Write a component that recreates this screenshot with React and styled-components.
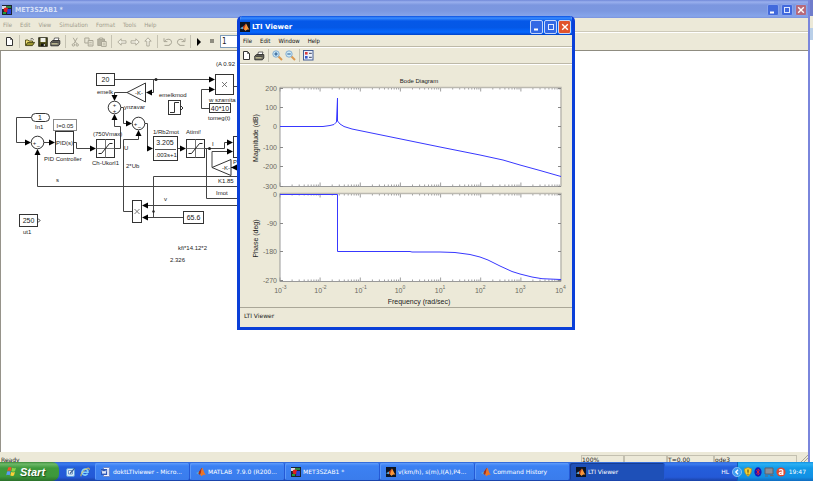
import React from "react";
import styled, { createGlobalStyle, css } from "styled-components";

const uiFont = `"DejaVu Sans Condensed", "DejaVu Sans", sans-serif`;
const wideFont = `"DejaVu Sans", sans-serif`;
const plotFont = `"Liberation Sans", Arial, sans-serif`;

const GlobalStyle = createGlobalStyle`
  * {
    box-sizing: border-box;
  }
  body {
    margin: 0;
    overflow: hidden;
    font-family: ${uiFont};
    font-size: 6px;
    line-height: 8px;
  }
  button, input {
    font: inherit;
    color: inherit;
    margin: 0;
    padding: 0;
    border: 0;
    background: none;
  }
  svg {
    display: block;
    flex-shrink: 0;
  }
`;

const Desktop = styled.div`
  height: 100vh;
  display: flex;
  flex-direction: column;
`;

const Workspace = styled.div`
  position: relative;
  flex: 1;
  min-height: 0;
  display: flex;
`;

const MainWindow = styled.section`
  flex: 1;
  min-width: 0;
  display: flex;
  flex-direction: column;
  background: #ece9d8;
  border-right: 2px solid #7a86dc;
`;

const WindowBehind = styled.div`
  width: 3px;
  background: linear-gradient(#6f7ccb 0 16px, #ece9d8 16px 28px, #b9cfe8 28px 40px, #fff 40px);
`;

const TitleBar = styled.header`
  display: flex;
  align-items: center;
  gap: ${(p) => (p.$active ? 2 : 3)}px;
  flex-shrink: 0;
  height: ${(p) => (p.$active ? 19 : 18)}px;
  padding: 2px 1px 0 ${(p) => (p.$active ? 0 : 2)}px;
  font-family: ${(p) => (p.$active ? wideFont : uiFont)};
  color: ${(p) => (p.$active ? "#fff" : "#d6e0f7")};
  background: ${(p) =>
    p.$active
      ? "linear-gradient(#0a4fe0 0, #3a8cff 2px, #0558e8 5px, #0458e6 60%, #0668ff 85%, #0042c8)"
      : "linear-gradient(#7088d8 0, #9ab0ee 2px, #7b96df 5px, #7b97e0 60%, #86a5ea 90%, #7a92dc)"};
`;

const Title = styled.h1`
  margin: 0;
  flex: 1;
  font-size: 7px;
  line-height: 10px;
  font-weight: bold;
`;

const WindowButtons = styled.div`
  display: flex;
  gap: ${(p) => (p.$active ? 1 : 2)}px;
`;

const WindowButton = styled.button`
  display: flex;
  align-items: center;
  justify-content: center;
  width: ${(p) => (p.$active ? 13 : 12)}px;
  height: ${(p) => (p.$active ? 14 : 12)}px;
  border: 1px solid ${(p) => (p.$active ? "#c4d6fb" : "#8aa5ec")};
  border-radius: 2px;
  background: ${(p) => (p.$active ? "#3268e4" : "#4169dc")};
  ${(p) =>
    p.$close &&
    css`
      background: ${p.$active ? "#e0532d" : "#b6697a"};
    `}
`;

const MenuBar = styled.nav`
  display: flex;
  align-items: center;
  flex-shrink: 0;
  gap: 8px;
  height: ${(p) => (p.$active ? 12 : 14)}px;
  padding: 0 3px;
  color: ${(p) => (p.$active ? "#111" : "#9f9c8c")};
  border-bottom: 1px solid ${(p) => (p.$active ? "#bdb9a8" : "#cdc9b9")};
`;

const ToolBar = styled.div`
  display: flex;
  align-items: center;
  flex-shrink: 0;
  height: ${(p) => (p.$active ? 17 : 19)}px;
  padding-left: ${(p) => (p.$active ? 0 : 3)}px;
  border-top: 1px solid #fff;
  border-bottom: 1px solid ${(p) => (p.$active ? "#bdb9a8" : "#8f8c80")};
`;

const ToolButton = styled.button`
  display: flex;
  align-items: center;
  justify-content: center;
  width: 13px;
  height: 14px;
`;

const Separator = styled.span`
  width: 1px;
  height: 13px;
  margin: 0 ${(p) => (p.$tight ? 2 : 3)}px;
  background: #c5c2b2;
`;

const StopTime = styled.input`
  width: 36px;
  height: 13px;
  padding-left: 1px;
  border: 1px solid #7f9db9;
  background: #fff;
  color: #222;
  font-size: 8px;
`;

const Canvas = styled.main`
  flex: 1;
  min-height: 0;
  overflow: hidden;
  background: #fff;
  border-left: 1px solid #96938a;
`;

const Drawing = styled.svg`
  width: 100%;
  height: 100%;
  font-family: ${plotFont};
  font-size: 6px;
  fill: #222;
`;

const StatusBar = styled.footer`
  display: flex;
  align-items: flex-end;
  flex-shrink: 0;
  height: 10px;
  padding: 0 0 0 1px;
  overflow: hidden;
  color: #222;
  font-family: ${wideFont};
`;

const StatusText = styled.span`
  flex: 1;
  height: 6px;
`;

const StatusCell = styled.span`
  width: ${(p) => p.$width}px;
  height: 7px;
  border: 1px solid #c3c0b0;
  border-bottom: 0;
  line-height: 7px;
`;

const Grip = styled.span`
  width: 11px;
  display: flex;
  justify-content: flex-end;
`;

const ViewerWindow = styled.section`
  position: absolute;
  left: 237px;
  top: 16px;
  width: 338px;
  display: flex;
  flex-direction: column;
  border: solid #0a3fd8;
  border-width: 0 3px 3px;
  border-radius: 5px 5px 0 0;
  overflow: hidden;
  background: #ece9d8;
`;

const PlotArea = styled.div`
  height: 243px;
  border-top: 1px solid #fff;
`;

const ViewerStatus = styled.footer`
  height: 20px;
  padding: 4px 4px;
  border-top: 1px solid #aaa798;
  color: #222;
  font-family: ${wideFont};
`;

const TaskBar = styled.nav`
  display: flex;
  flex-shrink: 0;
  height: 19px;
  color: #fff;
  font-family: ${wideFont};
  background: linear-gradient(#3168d5 0, #3a7cf0 2px, #245edb 5px, #2459d6 80%, #1941a5);
`;

const StartButton = styled.button`
  display: flex;
  align-items: center;
  gap: 3px;
  width: 59px;
  padding-left: 6px;
  border-radius: 0 7px 7px 0;
  background: linear-gradient(#3c8a3a 0, #6db868 2px, #3f9a3c 6px, #3d983b 75%, #2b702a);
  font-family: ${plotFont};
  font-size: 11px;
  line-height: 12px;
  font-style: italic;
  font-weight: bold;
  text-shadow: 1px 1px 1px #1f4f1d;
`;

const QuickLaunch = styled.div`
  display: flex;
  align-items: center;
  gap: 4px;
  width: 36px;
  padding-left: 7px;
`;

const Tasks = styled.div`
  display: flex;
  flex: 1;
  min-width: 0;
`;

const Task = styled.button`
  display: flex;
  align-items: center;
  gap: 2px;
  flex: 0 1 95px;
  min-width: 0;
  padding: 0 6px;
  margin: 1px 0;
  border-radius: 2px;
  white-space: pre;
  background: ${(p) => (p.$pressed ? "#1e50b8" : "linear-gradient(#5a9bff 0, #3c81f3 3px, #3a7cec)")};
  border-right: 1px solid #2459d6;
  box-shadow: inset 1px 1px 0 ${(p) => (p.$pressed ? "#173e93" : "#5b98f8")};
`;

const Language = styled.span`
  align-self: center;
  padding-right: 8px;
`;

const Tray = styled.div`
  display: flex;
  align-items: center;
  gap: 2px;
  width: 76px;
  padding-right: 7px;
  border-left: 1px solid #0f5fb8;
  background: linear-gradient(#1290e0 0, #2bb0f4 2px, #129ae8 6px, #1190e4 80%, #0f6cc0);
`;

const ExpandButton = styled.button`
  display: flex;
  margin-left: -6px;
`;

const Clock = styled.time`
  margin-left: auto;
`;

const gray = "#aaa797";

const MatlabIcon = () => (
  <svg width="10" height="10" viewBox="0 0 10 10">
    <path d="M0 6 L3 4.4 L4.6 6 L2.4 7.4Z" fill="#5aa9d8" />
    <path d="M3 4.4 C4.4 3.5 5 1 6 .8 L5.2 6 L4 7.8 L2.4 7Z" fill="#a82f18" />
    <path d="M6 .8 C7.2 1.2 8 6 9.8 8 C8 7.4 7 7.4 5.5 9.3 C5 8.2 4.5 7.6 4 7.8 C5 6.4 5.3 3 6 .8Z" fill="#ec7526" />
  </svg>
);

const FigureIcon = () => (
  <svg width="10" height="10" viewBox="0 0 10 10">
    <rect width="10" height="10" fill="#0b1424" />
    <path d="M0 6.2 L3 4.6 L4.6 6 L2.5 7.2Z" fill="#5aa9d8" />
    <path d="M3 4.6 C4.4 4 5 2 6 1.6 L5 7.8 L3 6.8Z" fill="#ba3c1c" />
    <path d="M6 1.6 C7 2.6 7.8 6 9.4 7.6 C7.6 7.2 6.6 7.6 5.4 9 C5 8 4.6 7.6 4 7.4Z" fill="#f7963a" />
  </svg>
);

const ModelIcon = () => (
  <svg width="10" height="10" viewBox="0 0 10 10">
    <rect width="10" height="10" fill="#1b2433" />
    <path d="M0 1h4v3H0z" fill="#d8dce8" />
    <path d="M4 1h5v2H4z" fill="#32863c" />
    <circle cx="4" cy="5" r="2.4" fill="#dd1f1f" />
    <path d="M5.5 4h3.5v5H5z" fill="#2942d6" />
    <path d="M1 7h3v2H1z" fill="#249838" />
  </svg>
);

const WordIcon = () => (
  <svg width="10" height="10" viewBox="0 0 10 10">
    <path d="M2.5 .5h6v9h-6z" fill="#f4f7ff" stroke="#6d87c8" />
    <rect x="0" y="2" width="6" height="6" fill="#2c58b8" />
    <path d="M1 3.5 L2 6.7 L3 4 L4 6.7 L5 3.5" fill="none" stroke="#fff" strokeWidth=".9" />
    <path d="M6.5 3h1M6.5 5h1M6.5 7h1" stroke="#7b93cc" />
  </svg>
);

const WindowsLogo = () => (
  <svg width="11" height="11" viewBox="0 0 11 11">
    <path d="M2.2 1.4 Q4 .4 5.6 1.4 L4.7 5 Q3 4.2 1.2 5Z" fill="#f0562a" />
    <path d="M6.2 1.8 Q8 2.7 10 1.7 L9 5.3 Q7 6.2 5.3 5.3Z" fill="#8bd44a" />
    <path d="M1.1 5.6 Q3 4.8 4.6 5.6 L3.7 9.2 Q2 8.4 .2 9.2Z" fill="#5a9cf5" />
    <path d="M5.2 6 Q7 6.9 8.9 6 L8 9.6 Q6.2 10.5 4.3 9.6Z" fill="#fbd03a" />
  </svg>
);

const DesktopIcon = () => (
  <svg width="10" height="10" viewBox="0 0 10 10">
    <rect x=".5" y="1.5" width="8" height="8" rx="1.5" fill="#d5e9fa" stroke="#5d9fde" />
    <path d="M2.5 3.5h4v3.5h-4z" fill="#fff" stroke="#4178b9" strokeWidth=".7" />
    <path d="M4 6.5 L8.8 1.2" stroke="#3b5f94" strokeWidth="1.2" />
  </svg>
);

const ExplorerIcon = () => (
  <svg width="10" height="10" viewBox="0 0 10 10">
    <path d="M7.6 6.6 A3 3 0 1 1 8 5.2 H3" fill="none" stroke="#83d0fa" strokeWidth="1.6" />
    <path d="M1 9.3 C0 6 6.5 .4 9 1.2 C9.8 1.6 9.2 2.8 8.6 3.4" fill="none" stroke="#f3cf4c" strokeWidth=".9" />
  </svg>
);

const NewIcon = () => (
  <svg width="9" height="10" viewBox="0 0 9 10">
    <path d="M1.5 .5 H5.5 L7.5 2.5 V8.5 H1.5Z" fill="#fff" stroke="#333" />
    <path d="M5.5 .5V2.5H7.5" fill="none" stroke="#333" strokeWidth=".7" />
  </svg>
);

const OpenIcon = () => (
  <svg width="10" height="10" viewBox="0 0 10 10">
    <path d="M.5 8.5 V3 H3 L4 4 H7.5 V5.5" fill="#f0df72" stroke="#4d4915" strokeWidth=".9" />
    <path d="M.7 8.6 L2.7 5.4 H9.6 L7.4 8.6Z" fill="#9b962f" stroke="#3e3c12" strokeWidth=".9" />
    <path d="M5.5 2 Q7.5 .7 8.7 2.8" fill="none" stroke="#333" strokeWidth=".8" />
  </svg>
);

const SaveIcon = () => (
  <svg width="10" height="10" viewBox="0 0 10 10">
    <rect x=".8" y=".8" width="8.4" height="8.4" fill="#55551b" stroke="#1a1a10" />
    <rect x="2.5" y="1" width="5" height="4" fill="#f1f1ea" />
    <rect x="3" y="6.5" width="4.2" height="2.7" fill="#15150c" />
    <rect x="5.8" y="7" width="1" height="2" fill="#ddd" />
  </svg>
);

const PrintIcon = () => (
  <svg width="11" height="10" viewBox="0 0 11 10">
    <path d="M3.5 4 L4.5 1 H9 L8 4Z" fill="#fff" stroke="#444" strokeWidth=".8" />
    <path d="M.8 5 L2.5 3.6 H9.8 V7 L8.4 8.8 H.8Z" fill="#77756a" stroke="#252525" strokeWidth=".9" />
    <path d="M1.5 6.8H7.5" stroke="#ded9a0" strokeWidth=".9" />
    <path d="M2 5.2H8.6" stroke="#222" strokeWidth=".7" />
  </svg>
);

const CutIcon = () => (
  <svg width="9" height="10" viewBox="0 0 9 10" fill="none" stroke={gray}>
    <path d="M2.2 .8 L5.6 6.6 M6.3 .8 L3 6.6" />
    <circle cx="2.4" cy="7.9" r="1.2" />
    <circle cx="6.2" cy="7.9" r="1.2" />
  </svg>
);

const CopyIcon = () => (
  <svg width="10" height="10" viewBox="0 0 10 10" fill="#e8e5d5" stroke={gray}>
    <path d="M.8 1h4.2v5H.8z" />
    <path d="M4.2 3.5h4.8v5.5H4.2z" />
    <path d="M5.2 5.4h2.6M5.2 7.2h2.6" strokeWidth=".7" />
  </svg>
);

const PasteIcon = () => (
  <svg width="10" height="10" viewBox="0 0 10 10" stroke={gray}>
    <path d="M.8 2h6.7v6.5H.8z" fill="#b5b2a2" />
    <path d="M2.6 1h3v1.6h-3z" fill="#ece9d8" />
    <path d="M4.5 4.5h4.7v4.9H4.5z" fill="#ece9d8" />
    <path d="M5.7 6.2h2.4M5.7 7.8h2.4" strokeWidth=".7" />
  </svg>
);

const BlockArrow = ({ turn }) => (
  <svg width="10" height="10" viewBox="0 0 10 10">
    <path
      transform={`rotate(${turn} 5 5)`}
      d="M.8 5 L4.2 1.8 V3.8 H9 V6.2 H4.2 V8.2Z"
      fill="#f4f2e6"
      stroke={gray}
      strokeWidth=".9"
    />
  </svg>
);

const UndoIcon = ({ redo }) => (
  <svg width="10" height="10" viewBox="0 0 10 10" fill="none" stroke={gray}>
    <path
      transform={redo ? "matrix(-1 0 0 1 10 0)" : undefined}
      d="M1 1.2V4.6H4.4 M1.4 4.2 Q3.3 1.8 6 2.2 Q8.8 2.8 8.6 5.3 Q8.2 7.8 6 8 M1.5 8.4H6.5"
    />
  </svg>
);

const PlayIcon = () => (
  <svg width="9" height="8" viewBox="0 0 9 8">
    <path d="M1 0 L5 4 L1 8Z" fill="#000" />
  </svg>
);

const StopIcon = () => (
  <svg width="7" height="5" viewBox="0 0 7 5">
    <rect width="4" height="4" fill="#8f8d80" />
  </svg>
);

const ZoomIcon = ({ out }) => (
  <svg width="11" height="11" viewBox="0 0 11 11">
    <path d="M6 6 L10 10" stroke="#dc9950" strokeWidth="2" />
    <circle cx="4" cy="4" r="3.2" fill="#cceaf8" stroke="#86add0" />
    <path d={out ? "M2.3 4H5.7" : "M2.3 4H5.7M4 2.3V5.7"} stroke="#24558e" strokeWidth="1.1" />
  </svg>
);

const LegendIcon = () => (
  <svg width="11" height="11" viewBox="0 0 11 11">
    <rect x=".5" y=".5" width="9.5" height="9.5" fill="#edf1fb" stroke="#445f94" />
    <rect x="2" y="2" width="2.6" height="2.6" fill="#d83b3b" />
    <rect x="2" y="6" width="2.6" height="2.6" fill="#3859c9" />
    <path d="M6 3.3h2.8M6 7.3h2.8" stroke="#37415c" />
  </svg>
);

const ShieldIcon = () => (
  <svg width="8" height="10" viewBox="0 0 8 10">
    <path d="M4 .5 L7.6 1.8 Q7.8 7 4 9.4 Q.2 7 .4 1.8Z" fill="#f6d132" stroke="#aa8620" strokeWidth=".7" />
    <path d="M4 2.5V5.7M4 6.7V7.8" stroke="#4b3c0a" />
  </svg>
);

const BluetoothIcon = () => (
  <svg width="8" height="10" viewBox="0 0 8 10">
    <ellipse cx="4" cy="5" rx="3.6" ry="4.7" fill="#1719b8" />
    <path d="M2.3 3.3 L5.5 6.4 L4 7.8 V2.2 L5.5 3.6 L2.3 6.7" fill="none" stroke="#e0253a" strokeWidth=".9" />
  </svg>
);

const NetworkIcon = () => (
  <svg width="10" height="10" viewBox="0 0 10 10">
    <path d="M1 1h8v6H1z" fill="#8b8f98" stroke="#5c616d" />
    <path d="M1 9 H4 M6 8.6 H9.5" stroke="#666b78" strokeWidth="1.2" />
  </svg>
);

const AntivirusIcon = () => (
  <svg width="10" height="10" viewBox="0 0 10 10">
    <circle cx="5" cy="5" r="4.6" fill="#de4930" />
    <path d="M3 3.2 Q5.5 1.8 6.8 3.6 V8 M6.5 5.2 Q3 5 3.2 6.8 Q4.4 8 6.4 6.6" fill="none" stroke="#fff" strokeWidth="1.2" />
  </svg>
);

const ExpandIcon = () => (
  <svg width="10" height="10" viewBox="0 0 10 10">
    <circle cx="5" cy="5" r="4.6" fill="#3f9df2" stroke="#b7dcfa" strokeWidth=".6" />
    <path d="M6 2.8 L3.8 5 L6 7.2" fill="none" stroke="#fff" strokeWidth="1.3" />
  </svg>
);

const GripIcon = () => (
  <svg width="7" height="7" viewBox="0 0 7 7">
    <path d="M0 7 L7 0 M3 7 L7 3" stroke="#a9a695" />
  </svg>
);

const WindowControls = ({ active }) => (
  <WindowButtons $active={active}>
    <WindowButton $active={active} aria-label="Minimize">
      <svg width="8" height="8"><path d="M1 6.5H5" stroke="#fff" strokeWidth="2" /></svg>
    </WindowButton>
    <WindowButton $active={active} aria-label="Maximize">
      <svg width="8" height="8"><path d="M1 1.5H7M1.5 2V7M6.5 2V7M1 6.5H7" fill="none" stroke="#dfe8ff" /></svg>
    </WindowButton>
    <WindowButton $active={active} $close aria-label="Close">
      <svg width="8" height="8"><path d="M1.2 1.2L6.8 6.8M6.8 1.2L1.2 6.8" stroke="#fff" strokeWidth="1.4" /></svg>
    </WindowButton>
  </WindowButtons>
);

const heads = {
  right: "0,0 -6,-3 -6,3",
  left: "0,0 6,-3 6,3",
  up: "0,0 -3,6 3,6",
  down: "0,0 -3,-6 3,-6",
};

const Head = ({ x, y, to = "right" }) => (
  <polygon points={heads[to]} transform={`translate(${x} ${y})`} fill="#000" />
);

const Block = ({ x, y, w, h, label, size = 7, stroke = "#333" }) => (
  <g>
    <rect x={x} y={y} width={w} height={h} fill="#fff" stroke={stroke} />
    {label && (
      <text x={x + w / 2} y={y + h / 2 + 2.5} fontSize={size} textAnchor="middle">
        {label}
      </text>
    )}
  </g>
);

const Product = ({ x, y, w, h }) => (
  <g>
    <Block x={x} y={y} w={w} h={h} />
    <path
      d="M-2.5 -2.5L2.5 2.5M2.5 -2.5L-2.5 2.5"
      transform={`translate(${x + w / 2} ${y + h / 2})`}
      stroke="#555"
      strokeWidth=".8"
    />
  </g>
);

const Sum = ({ x, y, a, b, side }) => (
  <g>
    <circle cx={x} cy={y} r="6.3" fill="#fff" stroke="#333" />
    <text x={side ? x - 3 : x} y={side ? y + 2 : y - 1} textAnchor="middle">{a}</text>
    <text x={side ? x + 1 : x} y={y + 5} textAnchor="middle">{b}</text>
  </g>
);

const Saturation = ({ x, y }) => (
  <g>
    <Block x={x} y={y} w={18} h={18} />
    <path d={`M${x} ${y + 9}h18M${x + 9} ${y}v18`} stroke="#777" />
    <path d={`M${x + 2} ${y + 14}h3l8 -10h3`} fill="none" stroke="#222" />
  </g>
);

const wires = [
  "M114 79.5H212",
  "M155.5 79.5H153.5V92.5H147",
  "M127 92.5H114.5V97",
  "M121 107.5H123.5V123.5H128",
  "M115 148.5H120.5V126.5H114.5V118",
  "M145 123.5H147.5V148.5H150",
  "M133 211.5H123.5V139.5H138.5V133",
  "M31 117.5H16.5V142.5H27",
  "M44 142.5H50",
  "M73 142.5H76.5V148.5H92",
  "M177 148.5H183",
  "M204 148.5H224.5V142.5H229",
  "M206.5 148.5V198.5H245",
  "M212 167.5V151.5H229",
  "M231 167.5H245",
  "M209 108.5H201.5V89.5H212",
  "M233 86.5H245",
  "M37.5 153V186.5H245",
  "M245 176.5H153.5V217.5",
  "M245 205.5H146",
  "M183 217.5H146",
];

const labels = [
  [97, 94, "emelk"],
  [124, 109, "ynzavar"],
  [159, 97, "emelkmod"],
  [216, 66, "(A 0.92"],
  [209, 102, "w szamita"],
  [208, 120, "tomeg(t)"],
  [35, 129, "In1"],
  [44, 161, "PID Controller"],
  [93, 136, "(750Vmax)"],
  [92, 165, "Ch-Ukorl1"],
  [153, 134, "1/Rb2mot"],
  [186, 134, "Atimi!"],
  [124, 150, "U"],
  [126, 168, "2*Ub"],
  [212, 146, "I"],
  [218, 183, "K1.85"],
  [216, 195, "Imot"],
  [56, 182, "s"],
  [164, 201, "v"],
  [23, 234, "ut1"],
  [178, 250, "kfi*14.12*2"],
  [170, 262, "2.326"],
  [233, 164, "P"],
];

const BlockDiagram = () => (
  <Drawing role="img" aria-label="MET3SZAB1 block diagram">
    <g transform="translate(-1 -51)">
      {wires.map((d) => (
        <path key={d} d={d} fill="none" stroke="#444" />
      ))}
      <Block x={96.5} y={73.5} w={18} h={12} label="20" />
      <Product x={215.5} y={74.5} w={18} h={20} />
      <Block x={209.5} y={103.5} w={21} h={9} label="40*10" />
      <Block x={168.5} y={100.5} w={12} h={14} />
      <path d="M170 112.5H174.5V102.5H179M181 106L183 108L181 110" fill="none" stroke="#333" />
      <Block x={53.5} y={119.5} w={23} h={11} label="I=0.05" size={6} stroke="#888" />
      <Block x={55.5} y={131.5} w={18} h={22} label="PID(s)" size={6} />
      <Block x={153.5} y={136.5} w={24} h={24} />
      <path d="M155 149.5H176" stroke="#555" />
      <text x="165" y="145" fontSize="7" textAnchor="middle">3.205</text>
      <text x="166" y="157" textAnchor="middle">.003s+1</text>
      <Block x={233.5} y={136.5} w={18} h={21} />
      <Product x={132.5} y={200.5} w={9} h={22} />
      <Block x={183.5} y={211.5} w={20} h={12} label="65.6" />
      <Block x={19.5} y={214.5} w={18} h={12} label="250" />
      <path d="M38 218.5L40 220.5L38 222.5" fill="none" stroke="#333" />
      <Saturation x={96.5} y={139.5} />
      <Saturation x={186.5} y={139.5} />
      <rect x="31.5" y="113.5" width="18" height="8" rx="4" fill="#fff" stroke="#333" />
      <text x="40" y="120" fontSize="7" textAnchor="middle">1</text>
      <path d="M127 92.5L145.5 83V102Z" fill="#fff" stroke="#333" />
      <text x="139" y="95" textAnchor="middle">-K-</text>
      <path d="M212 167.5L231 159.5V175.5Z" fill="#fff" stroke="#333" />
      <text x="226" y="170" textAnchor="middle">-K-</text>
      <Sum x={114.5} y={107.5} a="+" b="+" />
      <Sum x={138.5} y={123.5} a="+" b="−" side />
      <Sum x={37.5} y={142.5} a="+" b="−" side />
      <circle cx="156" cy="79.5" r="1.5" />
      <circle cx="209.5" cy="148.5" r="1.5" />
      <circle cx="153.5" cy="211.5" r="1.2" />
      <Head x={215} y={79.5} />
      <Head x={215} y={89.5} />
      <Head x={146} y={92.5} to="left" />
      <Head x={114.5} y={101} to="down" />
      <Head x={114.5} y={114} to="up" />
      <Head x={132} y={123.5} />
      <Head x={138.5} y={130} to="up" />
      <Head x={31} y={142.5} />
      <Head x={37.5} y={149} to="up" />
      <Head x={55} y={142.5} />
      <Head x={96} y={148.5} />
      <Head x={153} y={148.5} />
      <Head x={186} y={148.5} />
      <Head x={233} y={142.5} />
      <Head x={233} y={151.5} />
      <Head x={231} y={167.5} to="left" />
      <Head x={142} y={205.5} to="left" />
      <Head x={142} y={217.5} to="left" />
      {labels.map(([x, y, text]) => (
        <text key={text} x={x} y={y}>{text}</text>
      ))}
    </g>
  </Drawing>
);

const LEFT = 280;
const RIGHT = 561;
const DECADE = (RIGHT - LEFT) / 7;

// log spaced ticks, long at each power of ten
const logTicks = (top, bottom) => {
  let d = "";
  for (let k = 0; k < 7; k++) {
    for (let m = 1; m < 10; m++) {
      const x = (LEFT + (k + Math.log10(m)) * DECADE).toFixed(1);
      const len = m === 1 ? 4 : 2;
      d += `M${x} ${top}v${len}M${x} ${bottom}v${-len}`;
    }
  }
  return d;
};

const Axes = ({ top, bottom, ticks, name }) => (
  <g>
    <rect x={LEFT} y={top} width={RIGHT - LEFT} height={bottom - top} fill="#fff" />
    <path d={logTicks(top, bottom)} stroke="#888" strokeWidth=".8" />
    <path d={`M${LEFT} ${top}H${RIGHT}V${bottom}`} fill="none" stroke="#bbb9b0" strokeWidth="1.5" />
    <path d={`M${LEFT} ${top}V${bottom}H${RIGHT}`} fill="none" stroke="#999" />
    {ticks.map(([y, value]) => (
      <g key={value}>
        <path d={`M${LEFT} ${y}h3M${RIGHT} ${y}h-3`} stroke="#888" />
        <text x={LEFT - 3} y={y + 2.5} fontSize="7" fill="#6b6962" textAnchor="end">{value}</text>
      </g>
    ))}
    <text fontSize="7" textAnchor="middle" transform={`translate(258 ${(top + bottom) / 2 + 1}) rotate(-90)`}>
      {name}
    </text>
  </g>
);

const BodePlot = () => (
  <Drawing role="img" aria-label="Bode Diagram">
    <g transform="translate(-240 -65)">
      <text x="419" y="83" textAnchor="middle">Bode Diagram</text>
      <Axes
        top={87.5}
        bottom={186.5}
        name="Magnitude (dB)"
        ticks={[[88.5, "200"], [107.5, "100"], [126.5, "0"], [147.5, "-100"], [166.5, "-200"], [186.5, "-300"]]}
      />
      <Axes
        top={193.5}
        bottom={281.5}
        name="Phase (deg)"
        ticks={[[194.5, "0"], [223.5, "-90"], [251.5, "-180"], [280.5, "-270"]]}
      />
      <path
        d="M280 126.5H323L330 125.5L334 124.5L336.5 122L337.5 98V121L340 124L344 126.5L352 129L374 133.5L440 147L480 155L503 160L520 165L540 170.5L561 176.5"
        fill="none"
        stroke="#3838ff"
      />
      <path
        d="M280 194.5H337.5V251.5H410L412 252H440L455 252.5L470 254.5L480 257L488 260L500 266L512 271.5L520 274L532 277L542 278.7L561 279.5"
        fill="none"
        stroke="#3838ff"
      />
      {[-3, -2, -1, 0, 1, 2, 3, 4].map((n, i) => (
        <g key={n} fill="#6b6962">
          <text x={LEFT + i * DECADE + 2} y="293" fontSize="7" textAnchor="end">10</text>
          <text x={LEFT + i * DECADE + 2} y="289" fontSize="5">{n}</text>
        </g>
      ))}
      <text x="419" y="304" fontSize="7" textAnchor="middle">Frequency (rad/sec)</text>
    </g>
  </Drawing>
);

const mainTools = [
  [["New", <NewIcon />]],
  [["Open", <OpenIcon />], ["Save", <SaveIcon />], ["Print", <PrintIcon />]],
  [["Cut", <CutIcon />], ["Copy", <CopyIcon />], ["Paste", <PasteIcon />]],
  [["Back", <BlockArrow turn={0} />], ["Forward", <BlockArrow turn={180} />], ["Up", <BlockArrow turn={90} />]],
  [["Undo", <UndoIcon />], ["Redo", <UndoIcon redo />]],
  [["Start simulation", <PlayIcon />], ["Stop", <StopIcon />]],
];

const viewerTools = [
  [["New viewer", <NewIcon />], ["Print plot", <PrintIcon />]],
  [["Zoom in", <ZoomIcon />], ["Zoom out", <ZoomIcon out />]],
  [["Legend", <LegendIcon />]],
];

const Tools = ({ groups, tight }) =>
  groups.map((group, i) => (
    <React.Fragment key={group[0][0]}>
      {i > 0 && <Separator $tight={tight} />}
      {group.map(([name, icon]) => (
        <ToolButton key={name} aria-label={name}>
          {icon}
        </ToolButton>
      ))}
    </React.Fragment>
  ));

const tasks = [
  ["doktLTIviewer - Micro...", <WordIcon />],
  ["MATLAB  7.9.0 (R200...", <MatlabIcon />],
  ["MET3SZAB1 *", <ModelIcon />],
  ["v(km/h), s(m),I(A),P4...", <FigureIcon />],
  ["Command History", <MatlabIcon />],
  ["LTI Viewer", <FigureIcon />],
];

export default function App() {
  return (
    <Desktop>
      <GlobalStyle />
      <Workspace>
        <MainWindow>
          <TitleBar>
            <ModelIcon />
            <Title>MET3SZAB1 *</Title>
            <WindowControls />
          </TitleBar>
          <MenuBar>
            {["File", "Edit", "View", "Simulation", "Format", "Tools", "Help"].map((m) => (
              <button key={m}>{m}</button>
            ))}
          </MenuBar>
          <ToolBar>
            <Tools groups={mainTools} />
            <StopTime aria-label="Simulation stop time" defaultValue="1" />
          </ToolBar>
          <Canvas>
            <BlockDiagram />
          </Canvas>
          <StatusBar>
            <StatusText>Ready</StatusText>
            <StatusCell $width={43}>100%</StatusCell>
            <StatusCell $width={43} />
            <StatusCell $width={47}>T=0.00</StatusCell>
            <StatusCell $width={83}>ode3</StatusCell>
            <Grip><GripIcon /></Grip>
          </StatusBar>
        </MainWindow>
        <WindowBehind />
        <ViewerWindow>
          <TitleBar $active>
            <FigureIcon />
            <Title>LTI Viewer</Title>
            <WindowControls active />
          </TitleBar>
          <MenuBar $active>
            {["File", "Edit", "Window", "Help"].map((m) => (
              <button key={m}>{m}</button>
            ))}
          </MenuBar>
          <ToolBar $active>
            <Tools groups={viewerTools} tight />
          </ToolBar>
          <PlotArea>
            <BodePlot />
          </PlotArea>
          <ViewerStatus>LTI Viewer</ViewerStatus>
        </ViewerWindow>
      </Workspace>
      <TaskBar>
        <StartButton>
          <WindowsLogo />
          Start
        </StartButton>
        <QuickLaunch>
          <DesktopIcon />
          <ExplorerIcon />
        </QuickLaunch>
        <Tasks>
          {tasks.map(([name, icon], i) => (
            <Task key={name} $pressed={i === tasks.length - 1}>
              {icon}
              {name}
            </Task>
          ))}
        </Tasks>
        <Language>HL</Language>
        <Tray>
          <ExpandButton aria-label="Show hidden icons"><ExpandIcon /></ExpandButton>
          <ShieldIcon />
          <BluetoothIcon />
          <NetworkIcon />
          <AntivirusIcon />
          <Clock>19:47</Clock>
        </Tray>
      </TaskBar>
    </Desktop>
  );
}
